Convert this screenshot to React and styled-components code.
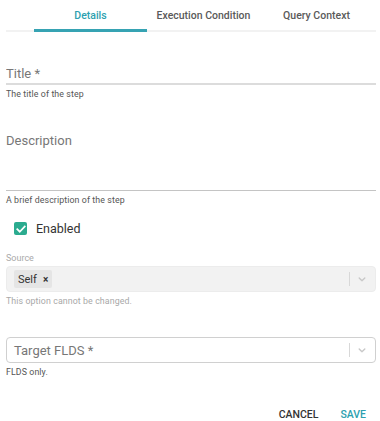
import React, { useState } from 'react';
import styled, { createGlobalStyle } from 'styled-components';

const GlobalStyle = createGlobalStyle`
    html, body {
        margin: 0;
        padding: 0;
        background: #fff;
        font-family: Roboto, "Liberation Sans", Arial, sans-serif;
    }
`;

const TABS = ['Details', 'Execution Condition', 'Query Context'];

const Chevron = () => (
    <svg width="12" height="12" viewBox="0 0 20 20" fill="#c8c8c8">
        <path d="M4.516 7.548c0.436-0.446 1.043-0.481 1.576 0l3.908 3.747 3.908-3.747c0.533-0.481 1.141-0.446 1.574 0 0.436 0.445 0.408 1.197 0 1.615-0.406 0.418-4.695 4.502-4.695 4.502-0.217 0.223-0.502 0.335-0.787 0.335s-0.57-0.112-0.789-0.335c0 0-4.287-4.084-4.695-4.502s-0.436-1.17 0-1.615z" />
    </svg>
);

const App = () => {
    const [active, setActive] = useState(0);
    const [enabled, setEnabled] = useState(true);

    return (
        <Wrapper>
            <GlobalStyle />
            <TabBar>
                {TABS.map((tab, i) => (
                    <Tab key={tab} active={i === active} onClick={() => setActive(i)}>
                        {tab}
                    </Tab>
                ))}
            </TabBar>

            <Form>
                <Field>
                    <TextInput placeholder="Title *" />
                    <Helper>The title of the step</Helper>
                </Field>

                <Field>
                    <TextArea placeholder="Description" />
                    <Helper>A brief description of the step</Helper>
                </Field>

                <CheckRow onClick={() => setEnabled(!enabled)}>
                    <Box checked={enabled}>
                        {enabled && (
                            <svg width="10" height="10" viewBox="0 0 24 24" fill="none" stroke="#fff" strokeWidth="4" strokeLinecap="square">
                                <path d="M3 12.5l6 6L21 6" />
                            </svg>
                        )}
                    </Box>
                    <span>Enabled</span>
                </CheckRow>

                <SelectField>
                    <SmallLabel>Source</SmallLabel>
                    <Select disabled>
                        <Values>
                            <Chip>
                                Self <span>×</span>
                            </Chip>
                        </Values>
                        <Indicator>
                            <Chevron />
                        </Indicator>
                    </Select>
                    <Helper muted>This option cannot be changed.</Helper>
                </SelectField>

                <SelectField spaced>
                    <Select>
                        <Values>
                            <Placeholder>Target FLDS *</Placeholder>
                        </Values>
                        <Indicator>
                            <Chevron />
                        </Indicator>
                    </Select>
                    <Helper>FLDS only.</Helper>
                </SelectField>
            </Form>

            <Actions>
                <Button>CANCEL</Button>
                <Button primary>SAVE</Button>
            </Actions>
        </Wrapper>
    );
};

const Wrapper = styled.div`
    width: 380px;
    height: 421px;
    padding: 0 4px 0 6px;
    box-sizing: border-box;
    display: flex;
    flex-direction: column;
`;

const TabBar = styled.div`
    display: flex;
    padding-left: 28px;
    border-bottom: 2px solid #f2f2f2;
    height: 30px;
`;

const Tab = styled.div`
    width: 113px;
    display: flex;
    align-items: center;
    justify-content: center;
    font-size: 10.5px;
    font-weight: 500;
    color: ${({ active }) => (active ? '#2d9fb0' : '#5a5a5a')};
    border-bottom: 3px solid ${({ active }) => (active ? '#36a3b3' : 'transparent')};
    margin-bottom: -2px;
    box-sizing: border-box;
    padding-top: 1px;
    cursor: pointer;
`;

const Form = styled.div`
    display: flex;
    flex-direction: column;
    padding-top: 32px;
`;

const Field = styled.div`
    display: flex;
    flex-direction: column;
    margin-bottom: 30px;
`;

const inputBase = `
    border: none;
    outline: none;
    font-family: inherit;
    font-size: 13px;
    color: #333;
    background: transparent;
    padding: 0;
    width: 100%;
    box-sizing: border-box;

    &::placeholder {
        color: #777;
    }
`;

const TextInput = styled.input`
    ${inputBase}
    height: 21px;
    border-bottom: 2px solid #dcdcdc;
`;

const TextArea = styled.textarea`
    ${inputBase}
    height: 62px;
    resize: none;
    padding-top: 4px;
    border-bottom: 1px solid #c4c4c4;
`;

const Helper = styled.div`
    font-size: 8.8px;
    color: ${({ muted }) => (muted ? '#a8a8a8' : '#555')};
    margin-top: 4px;
    letter-spacing: 0.1px;
`;

const CheckRow = styled.label`
    display: flex;
    align-items: center;
    gap: 9px;
    margin: -14px 0 0 8px;
    font-size: 12.5px;
    color: #333;
    cursor: pointer;
`;

const Box = styled.span`
    width: 13px;
    height: 13px;
    border-radius: 2px;
    display: flex;
    align-items: center;
    justify-content: center;
    background: ${({ checked }) => (checked ? '#2bab8f' : '#fff')};
    border: ${({ checked }) => (checked ? 'none' : '2px solid #888')};
`;

const SelectField = styled.div`
    display: flex;
    flex-direction: column;
    margin-top: ${({ spaced }) => (spaced ? '31px' : '17px')};
`;

const SmallLabel = styled.div`
    font-size: 9px;
    color: #aaa;
    margin-bottom: 3px;
`;

const Select = styled.div`
    display: flex;
    align-items: center;
    height: 26px;
    border-radius: 4px;
    border: 1px solid ${({ disabled }) => (disabled ? '#ececec' : '#d0d0d0')};
    background: ${({ disabled }) => (disabled ? '#f2f2f2' : '#fff')};
    box-sizing: border-box;
`;

const Values = styled.div`
    flex: 1;
    display: flex;
    align-items: center;
    padding-left: 7px;
`;

const Chip = styled.div`
    display: flex;
    align-items: center;
    gap: 6px;
    height: 18px;
    padding: 0 4px;
    background: #e5e5e5;
    border-radius: 2px;
    font-size: 11px;
    color: #333;

    span {
        font-size: 10px;
        font-weight: 700;
    }
`;

const Placeholder = styled.div`
    font-size: 13px;
    color: #777;
`;

const Indicator = styled.div`
    display: flex;
    align-items: center;
    height: 100%;
    padding: 0 7px 0 7px;

    &::before {
        content: '';
        width: 1px;
        height: 14px;
        background: #d8d8d8;
        margin-right: 6px;
    }
`;

const Actions = styled.div`
    margin-top: auto;
    display: flex;
    justify-content: flex-end;
    gap: 6px;
    padding: 0 2px 0 0;
`;

const Button = styled.button`
    border: none;
    background: none;
    font-family: inherit;
    font-size: 10.5px;
    font-weight: 500;
    padding: 3px 8px 0;
    color: ${({ primary }) => (primary ? '#2d9fb0' : '#333')};
    cursor: pointer;
`;

export default App;
